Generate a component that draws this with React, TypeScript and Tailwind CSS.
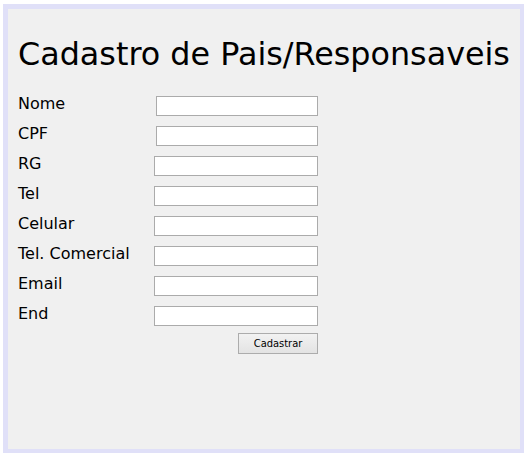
import React from 'react';

const fields = [
  { label: 'Nome', shift: true },
  { label: 'CPF', shift: true },
  { label: 'RG', shift: false },
  { label: 'Tel', shift: false },
  { label: 'Celular', shift: false },
  { label: 'Tel. Comercial', shift: false },
  { label: 'Email', shift: false },
  { label: 'End', shift: false },
];

const App: React.FC = () => {
  return (
    <div className="w-[531px] h-[460px] bg-white pt-[4px] pl-[3px]" style={{ fontFamily: '"DejaVu Sans", sans-serif' }}>
      <div className="w-[521px] h-[449px] bg-[#e0e0f8] pt-[5px] pl-[5px]">
        <div className="w-[512px] h-[440px] bg-[#f0f0f0] pl-[10px]">
          <h1 className="pt-[25px] h-[87px] text-[31.8px] leading-[40px] text-black whitespace-nowrap">
            Cadastro de Pais/Responsaveis
          </h1>
          <div className="flex flex-col gap-[10px]">
            {fields.map((f) => (
              <div key={f.label} className="flex h-[20px] items-start">
                <span className="w-[136px] -mt-[2px] text-[16px] leading-[20px] text-black">{f.label}</span>
                <input
                  type="text"
                  className={`h-[20px] bg-white border border-[#ababab] outline-none ${f.shift ? 'ml-[2px] w-[162px]' : 'w-[164px]'}`}
                />
              </div>
            ))}
          </div>
          <div className="flex w-[300px] justify-end mt-[7px]">
            <button
              className="w-[80px] h-[21px] border border-[#acacac] bg-gradient-to-b from-[#f2f2f2] to-[#e3e3e3] text-[11px] leading-[19px] text-black"
              style={{ fontFamily: '"DejaVu Sans Condensed", "DejaVu Sans", sans-serif' }}
            >
              Cadastrar
            </button>
          </div>
        </div>
      </div>
    </div>
  );
};

export default App;
